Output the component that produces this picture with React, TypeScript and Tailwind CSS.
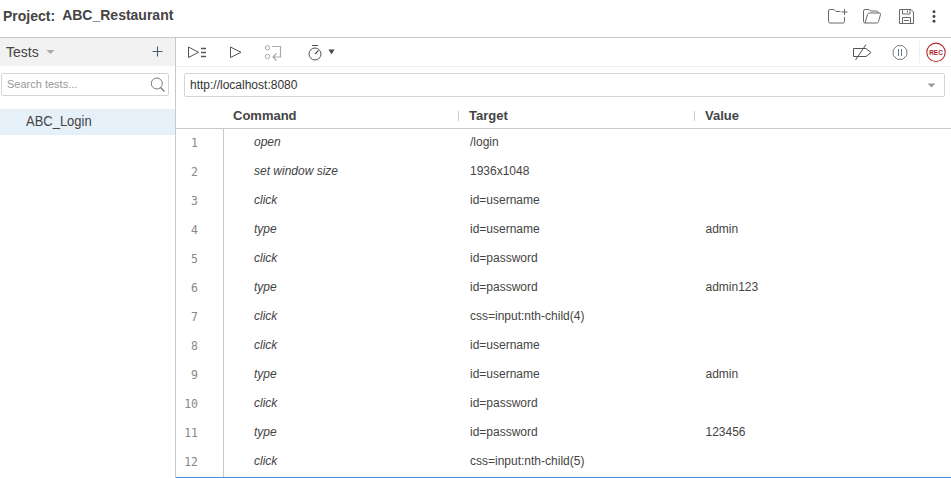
import React from 'react';

const steps: [string, string, string][] = [
  ['open', '/login', ''],
  ['set window size', '1936x1048', ''],
  ['click', 'id=username', ''],
  ['type', 'id=username', 'admin'],
  ['click', 'id=password', ''],
  ['type', 'id=password', 'admin123'],
  ['click', 'css=input:nth-child(4)', ''],
  ['click', 'id=username', ''],
  ['type', 'id=username', 'admin'],
  ['click', 'id=password', ''],
  ['type', 'id=password', '123456'],
  ['click', 'css=input:nth-child(5)', ''],
];

function Header() {
  return (
    <header className="flex h-[38px] shrink-0 items-start border-b border-[#c9c9c9] pl-[3px] font-bold text-[#444]">
      <span className="pt-[6px] text-[14px] leading-5">Project:</span>
      <span className="ml-[7px] pt-[5px] text-[14px] leading-5">ABC_Restaurant</span>
      <svg className="ml-auto shrink-0" width="127" height="37" viewBox="824 0 127 37" fill="none" stroke="#686868" strokeWidth="1">
        <path d="M844.500 17v4.500q0 1.500-1.500 1.500h-13q-1.500 0-1.500-1.500v-10.500q0-1.500 1.500-1.500h4l2 2h4.500M844.500 9v6M841.500 12h6" />
        <path d="M865 23q-1.500 0-1.500-1.500v-10.500q0-1.500 1.500-1.500h4l1.500 1.500h6q1.500 0 1.500 2M865 23l2.500-8.500q.4-1.500 2-1.500h9.500q2 0 1.500 1.500l-2 7q-.5 1.500-2 1.500z" />
        <path d="M899.500 9.500h11.500l2.500 2.500v11.500h-14zM902.500 9.500v4.500h7.500v-4.500M907.500 10.500v2M902.500 23.500v-6h8v6M904 20.500h5" />
        <g fill="#444" stroke="none">
          <circle cx="934" cy="11.800" r="1.450" />
          <circle cx="934" cy="16.500" r="1.450" />
          <circle cx="934" cy="21.200" r="1.450" />
        </g>
      </svg>
    </header>
  );
}

function Sidebar() {
  return (
    <aside className="w-44 shrink-0 border-r border-[#c9c9c9]">
      <div className="flex h-7 items-center bg-[#f2f2f2] pl-[6px] text-[14px] text-[#444]">
        <span>Tests</span>
        <svg className="ml-[7px]" width="9" height="6" viewBox="0 0 9 6"><path d="M.5 1h8L4.500 5z" fill="#aaa" /></svg>
        <svg className="mr-[11px] ml-auto" width="12" height="12" viewBox="0 0 12 12"><path d="M5.500 .5v10M.5 5.500h10" stroke="#47606f" strokeWidth="1.100" /></svg>
      </div>
      <div className="mt-[7px] ml-px flex h-[23px] w-[168px] items-center rounded-[2px] border border-[#d5d5d5] pl-[5px]">
        <span className="text-[11px] text-[#999]">Search tests...</span>
        <svg className="mt-px mr-[2px] ml-auto" width="16" height="16" viewBox="0 0 16 16" fill="none" stroke="#777"><circle cx="6.800" cy="6.500" r="5.500" /><path d="M10.500 10.500l4 4" strokeWidth="1.300" /></svg>
      </div>
      <div className="mt-[13px] flex h-[26px] items-center bg-[#e6f0f8] pb-px pl-[26px] text-[14px] text-[#444]">
        <span className="w-[65px] origin-left scale-x-[0.927] whitespace-nowrap">ABC_Login</span>
      </div>
    </aside>
  );
}

function Toolbar() {
  return (
    <div className="flex h-[29px] shrink-0 justify-between border-b border-[#eee]">
      <svg width="164" height="28" viewBox="176 38 164 28" fill="none" stroke="#555">
        <path d="M188.500 47v10.500l10-5.250z" />
        <path d="M201 48.500h5M201 52.500h5M201 56.500h5" strokeWidth="1.300" />
        <path d="M230.500 47v10.500l10.500-5.250z" />
        <g stroke="#aaa">
          <circle cx="267.500" cy="47.800" r="2.200" />
          <circle cx="267.500" cy="56.500" r="2.200" />
          <path d="M272 46.500h8.500v10.500h-7M276.500 53.500l-3.500 3.500 3.500 3.500" strokeWidth="1.200" />
        </g>
        <circle cx="315" cy="54" r="6" />
        <path d="M312 45.500h6M315 54l3.500-3.500" strokeWidth="1.200" />
        <path d="M328.500 49.500h6l-3 4.800z" fill="#444" stroke="none" />
      </svg>
      <svg width="111" height="28" viewBox="840 38 111 28" fill="none" stroke="#555">
        <path d="M853.500 48.500h12.500l5 4-5 4h-12.500zM855.500 60l10.500-15.500" />
        <path d="M897.200 45.700h5.600l4 4v5.600l-4 4h-5.600l-4-4v-5.600z" stroke="#777" />
        <path d="M898.500 49v7M901.500 49v7" stroke="#667b8c" />
        <path d="M919.500 41v22" stroke="#eee" />
        <circle cx="936" cy="52.300" r="9.200" stroke="#b52a2a" strokeWidth="1.100" />
        <text x="936" y="54.700" textAnchor="middle" fontFamily="Liberation Sans" fontWeight="bold" fontSize="6.400" fill="#b01e1e" stroke="none">REC</text>
      </svg>
    </div>
  );
}

export default function App() {
  return (
    <div className="flex h-[478px] w-[951px] flex-col overflow-hidden bg-white font-['Liberation_Sans',Arial,sans-serif]">
      <Header />
      <div className="flex min-h-0 flex-1">
        <Sidebar />
        <main className="flex min-w-0 flex-1 flex-col border-b border-[#4a8bea]">
          <Toolbar />
          <div className="mt-[6px] ml-2 flex h-[24px] w-[761px] shrink-0 items-center justify-between rounded-[2px] border border-[#d5d5d5] pr-2 pl-[5px] text-[12px] text-[#333]">
            <span>http://localhost:8080</span>
            <svg width="9" height="5" viewBox="0 0 9 5"><path d="M.5.500h8L4.500 4.500z" fill="#999" /></svg>
          </div>
          <div className="flex h-8 shrink-0 items-center border-b border-[#c9c9c9] pt-[6px] text-[13px] font-bold text-[#444]">
            <span className="ml-[57px] w-[225px]">Command</span>
            <span className="h-[10px] w-px bg-[#ccc]" />
            <span className="ml-[10px] w-[225px]">Target</span>
            <span className="h-[10px] w-px bg-[#ccc]" />
            <span className="ml-[10px]">Value</span>
          </div>
          <div className="min-h-0 flex-1">
            {steps.map(([command, target, value], i) => (
              <div key={i} className="flex h-[29px] text-[12px] leading-[27px] text-[#444]">
                <div className="w-12 shrink-0 border-r border-[#c9c9c9] pt-px pr-[25px] text-right font-['DejaVu_Sans_Mono',monospace] text-[11.5px] text-[#888]">{i + 1}</div>
                <div className="w-[216px] pl-[30px] italic">{command}</div>
                <div className="w-[235px] pl-[30px]">{target}</div>
                <div className="pl-[30.5px]">{value}</div>
              </div>
            ))}
          </div>
        </main>
      </div>
    </div>
  );
}
